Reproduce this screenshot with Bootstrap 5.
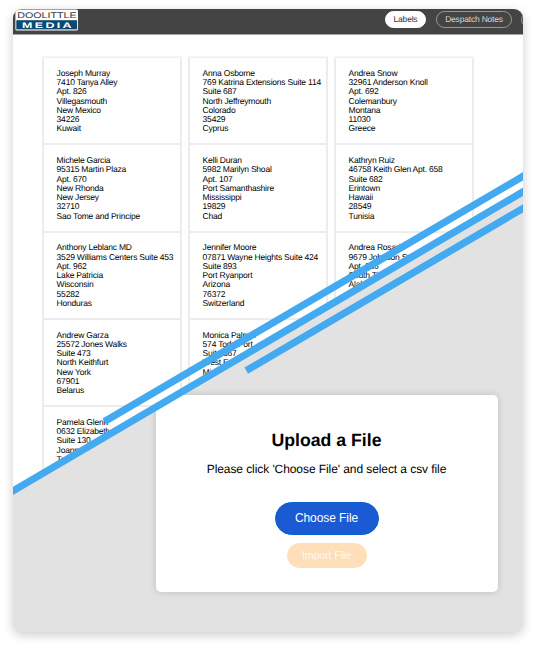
<!DOCTYPE html>
<html lang="en">
<head>
<meta charset="utf-8">
<meta name="viewport" content="width=device-width, initial-scale=1">
<title>Doolittle Media Labels</title>
<link href="https://cdn.jsdelivr.net/npm/bootstrap@5.3.0/dist/css/bootstrap.min.css" rel="stylesheet">
<style>
body{font-family:"Liberation Sans",Arial,sans-serif;color:#000;background:#fff;min-height:100vh;padding:9px 13px 0;text-rendering:geometricPrecision}
.frame{width:510px;height:623px;grid-template:623px/510px;border-radius:9px;background:#e2e2e2;box-shadow:0 3px 11px rgba(0,0,0,.2)}
.layer{grid-area:1/1;min-width:0;min-height:0}
.upload-layer{padding:385.5px 25.5px 0 142.5px}
.upload-box{height:197px;border-radius:5px;background:#fff;box-shadow:0 0 7px rgba(0,0,0,.17);padding-top:34px}
.upload-box h1{font-size:17.7px;line-height:22px;font-weight:700;margin:0 0 10px}
.upload-box p{font-size:12px;letter-spacing:-.08px;line-height:16px;margin:0 0 25px}
.btn-choose{--bs-btn-color:#fff;--bs-btn-bg:#1a5ad3;--bs-btn-border-color:#0c60cb;width:104px;height:33px;font-size:12px;letter-spacing:-.08px;line-height:15px;margin-bottom:8px}
.btn-bring{--bs-btn-disabled-color:#fff7ee;--bs-btn-disabled-bg:#ffdfb9;--bs-btn-disabled-border-color:#ffdfb9;--bs-btn-disabled-opacity:1;width:80px;height:25px;font-size:10.6px;letter-spacing:-.08px;line-height:13px}
.doc-layer{background:#fff;clip-path:polygon(0 0,510px 0,510px 183px,0 482px)}
.stripes{z-index:1}
.topbar{height:25.5px;background:#444;border-bottom:1px solid #a5a5a5}
.topbar .logo{width:64px;height:22px;margin:0 0 3px 2px}
.pill{height:16.5px;font-size:8.5px;letter-spacing:-.2px;flex:none;margin-bottom:4px;border:1px solid #999;color:#d6d6d6;line-height:1;padding-top:.8px}
.pill-on{width:41px;background:#fff;border-color:#fff;color:#333;margin-right:10px}
.pill-off{width:76px;margin-right:9px}
.pill-cut{width:60px;margin-right:-58px}
.sheet{grid-template-columns:repeat(3,140px);grid-auto-rows:87.25px;column-gap:6px;margin:23.5px 0 0 29px}
.label-card{border:solid #ececec;border-width:0 2px 2px;padding:10.8px 0 0 12.6px;font-size:8.5px;letter-spacing:-.21px;line-height:9.25px;white-space:pre}
.label-card.first{box-shadow:0 -1.5px 0 #f0f0f0}
</style>
<script src="https://cdn.jsdelivr.net/npm/bootstrap@5.3.0/dist/js/bootstrap.bundle.min.js"></script>
</head>
<body>
<main class="frame d-grid overflow-hidden">
  <section class="layer upload-layer">
    <div class="upload-box d-flex flex-column align-items-center text-center">
      <h1>Upload a File</h1>
      <p>Please click 'Choose File' and select a csv file</p>
      <button class="btn btn-choose rounded-pill p-0">Choose File</button>
      <button class="btn btn-bring rounded-pill p-0" disabled>Import File</button>
    </div>
  </section>
  <section class="layer doc-layer">
    <nav class="topbar d-flex align-items-center">
      <svg class="logo me-auto" viewBox="0 0 64 22" role="img" aria-label="Doolittle Media">
        <rect x=".4" y=".4" width="62.6" height="21" rx="1.5" fill="#fff"/>
        <rect x="1.3" y="11.2" width="60.8" height="9.2" fill="#0b4a70"/>
        <text x="2.2" y="9" font-size="8.2" fill="#333" textLength="59.5" lengthAdjust="spacingAndGlyphs">DOOLITTLE</text>
        <text x="7" y="18.7" font-size="8" font-weight="700" fill="#fff" textLength="52" lengthAdjust="spacingAndGlyphs" letter-spacing="1.5">MEDIA</text>
      </svg>
      <a class="pill pill-on rounded-pill text-decoration-none d-flex align-items-center justify-content-center">Labels</a>
      <a class="pill pill-off rounded-pill text-decoration-none d-flex align-items-center justify-content-center">Despatch Notes</a>
      <a class="pill pill-cut rounded-pill"></a>
    </nav>
    <div class="sheet d-grid">
<div class="label-card first">Joseph Murray
7410 Tanya Alley
Apt. 826
Villegasmouth
New Mexico
34226
Kuwait</div>
<div class="label-card first">Anna Osborne
769 Katrina Extensions Suite 114
Suite 687
North Jeffreymouth
Colorado
35429
Cyprus</div>
<div class="label-card first">Andrea Snow
32961 Anderson Knoll
Apt. 692
Colemanbury
Montana
11030
Greece</div>
<div class="label-card">Michele Garcia
95315 Martin Plaza
Apt. 670
New Rhonda
New Jersey
32710
Sao Tome and Principe</div>
<div class="label-card">Kelli Duran
5982 Marilyn Shoal
Apt. 107
Port Samanthashire
Mississippi
19829
Chad</div>
<div class="label-card">Kathryn Ruiz
46758 Keith Glen Apt. 658
Suite 682
Erintown
Hawaii
28549
Tunisia</div>
<div class="label-card">Anthony Leblanc MD
3529 Williams Centers Suite 453
Apt. 962
Lake Patricia
Wisconsin
55282
Honduras</div>
<div class="label-card">Jennifer Moore
07871 Wayne Heights Suite 424
Suite 893
Port Ryanport
Arizona
76372
Switzerland</div>
<div class="label-card">Andrea Rosario
9679 Johnson St
Apt. 386
South Ti
Alaba</div>
<div class="label-card">Andrew Garza
25572 Jones Walks
Suite 473
North Keithfurt
New York
67901
Belarus</div>
<div class="label-card">Monica Palmer
574 Todd Port
Suite 367
West Eri
Min</div>
<div class="label-card"></div>
<div class="label-card">Pamela Glenn
0632 Elizabeth
Suite 130
Joanne
Tex</div>
    </div>
  </section>
  <svg class="layer stripes pe-none" width="510" height="623" viewBox="0 0 510 623" fill="none" stroke="#43a9f0" stroke-width="7.2" aria-hidden="true">
    <path d="M91.3 412.6 L520 161.4"/>
    <path d="M-10 487.7 L520 176.9"/>
    <path d="M233.3 361.6 L520 193.5"/>
  </svg>
</main>
</body>
</html>
